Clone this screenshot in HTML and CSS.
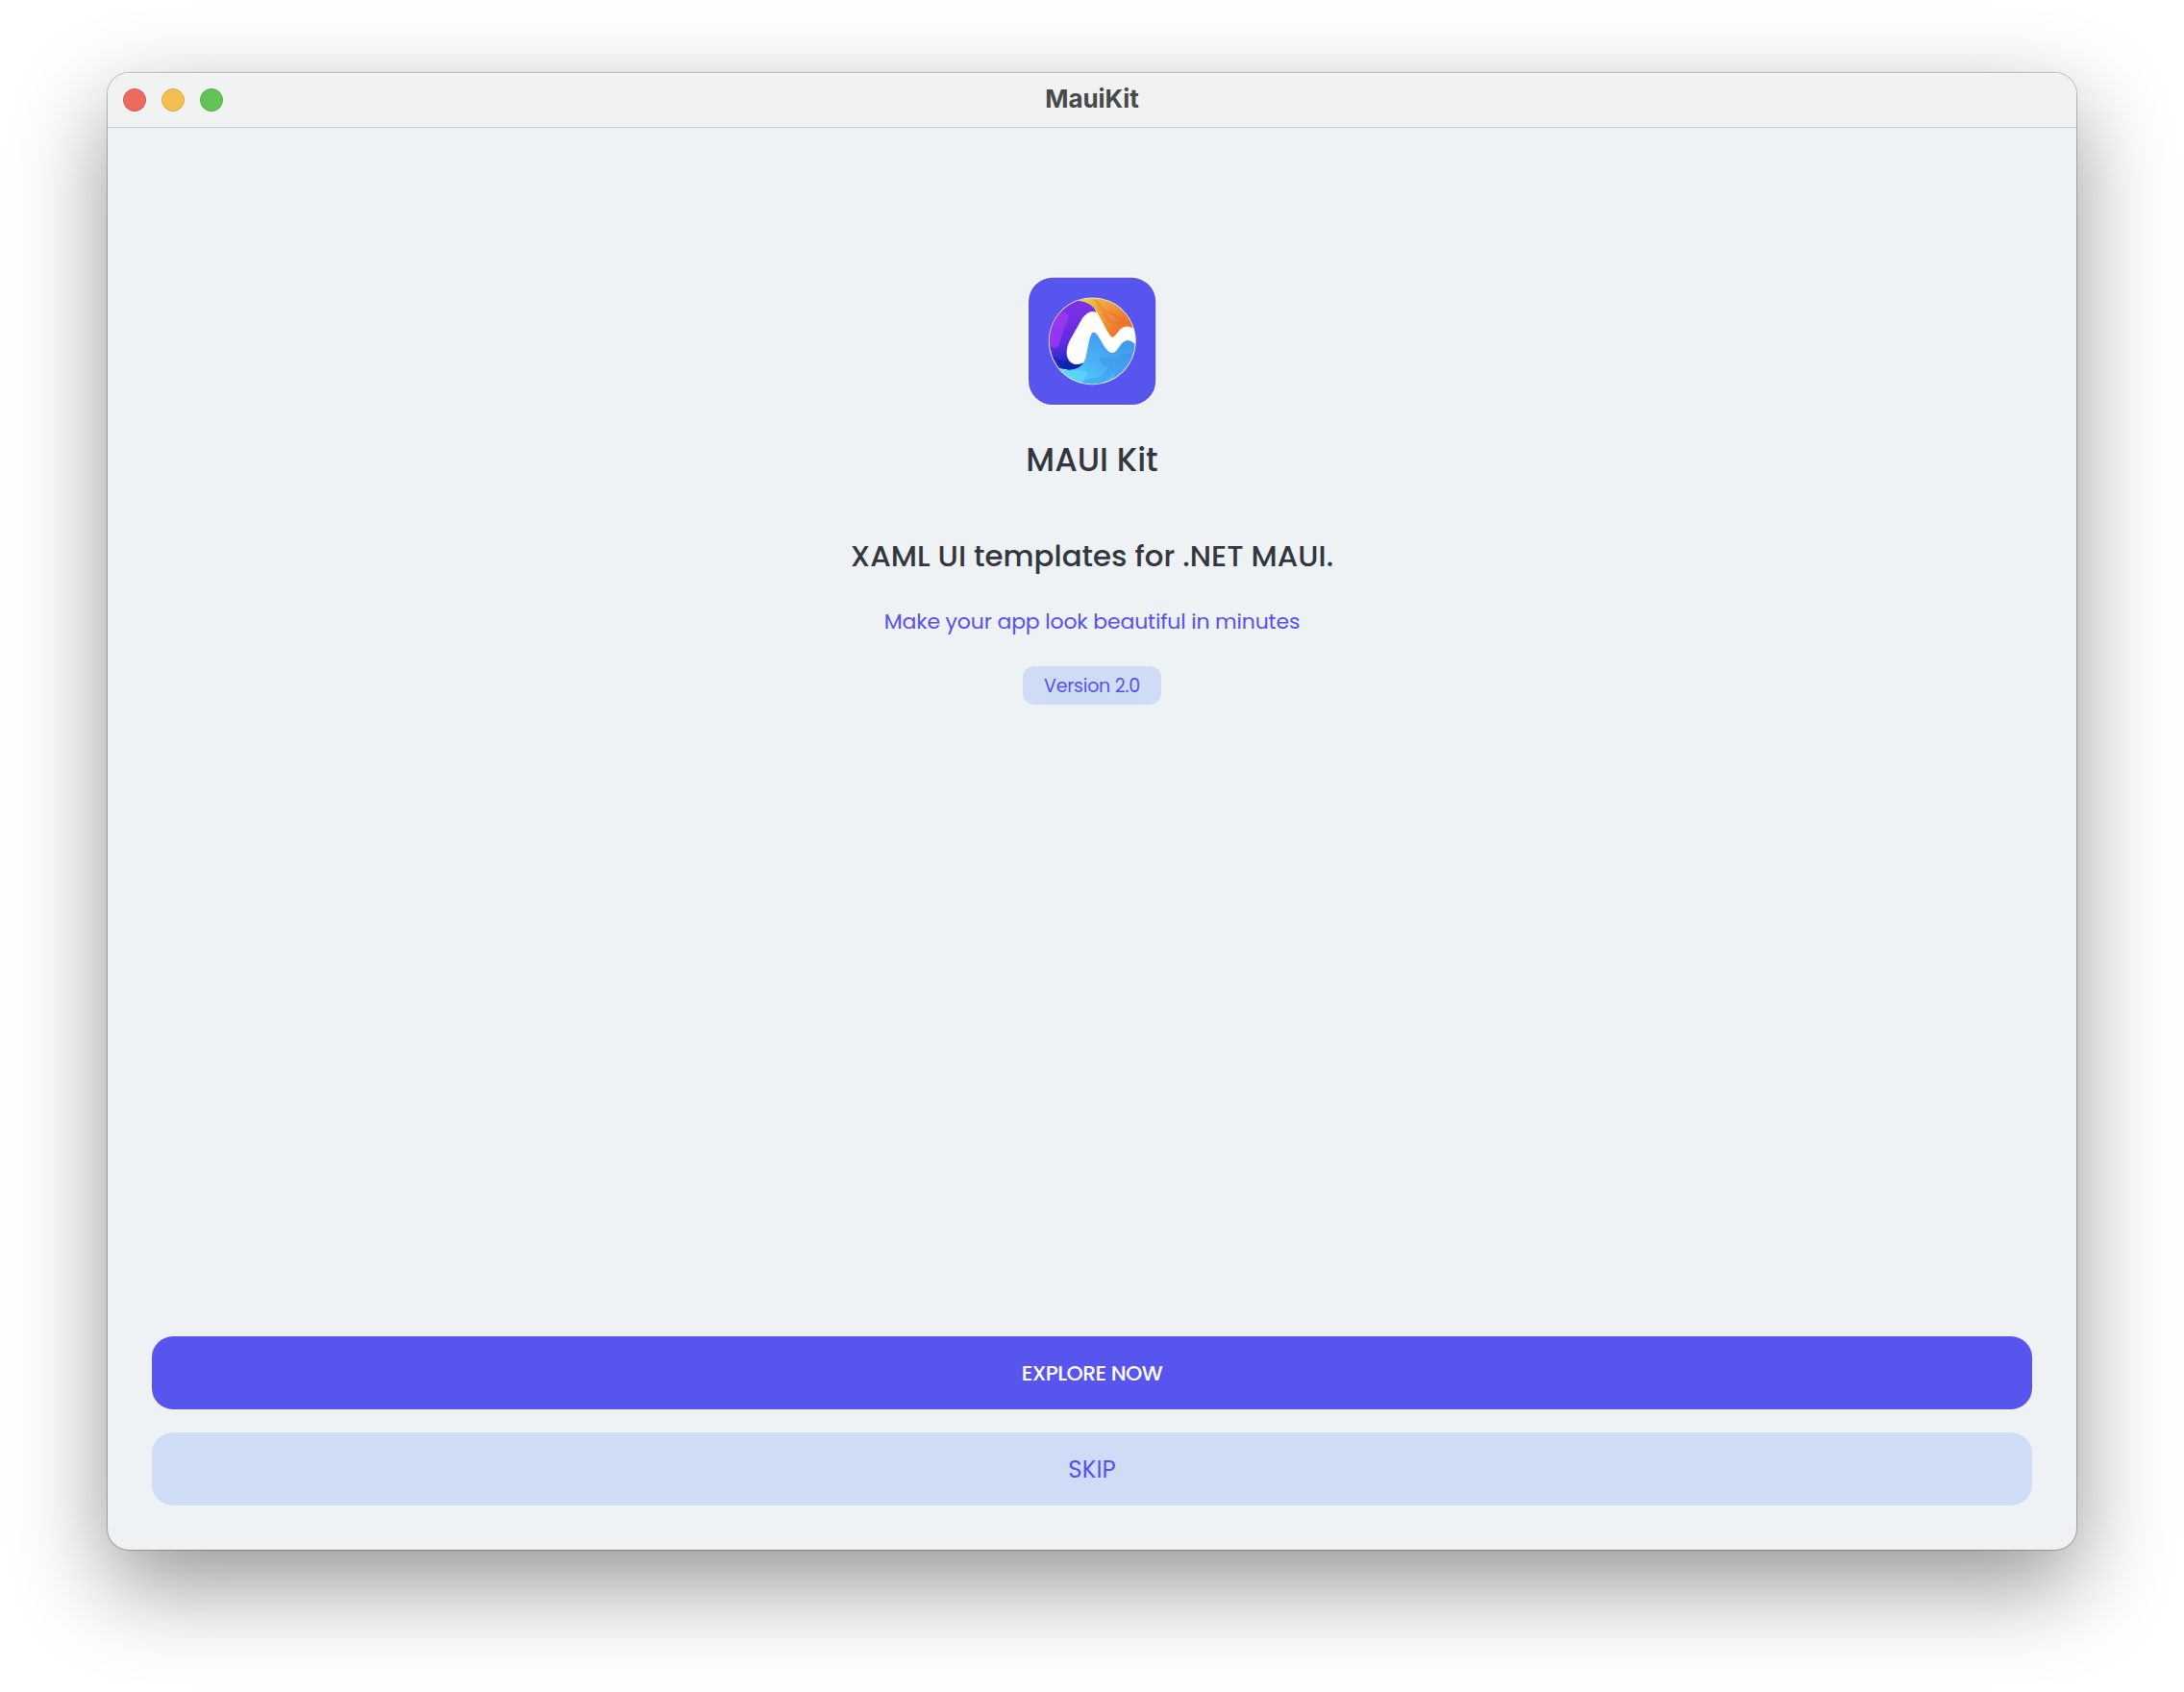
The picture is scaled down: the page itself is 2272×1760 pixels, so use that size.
FILE: index.html
```html
<!DOCTYPE html>
<html lang="en">
<head>
<meta charset="utf-8">
<title>MauiKit</title>
<link rel="stylesheet" href="styles.css">
</head>
<body>
<main class="window">
  <header class="titlebar">
    <div class="lights"><span class="light red"></span><span class="light yellow"></span><span class="light green"></span></div>
    <span class="title">MauiKit</span>
  </header>
  <section class="content">
    <div class="hero">
      <svg class="logo" viewBox="0 0 152 152" aria-hidden="true">
        <defs>
          <clipPath id="disc"><circle cx="76.3" cy="76.8" r="44.6"/></clipPath>
          <linearGradient id="purple" x1="0" y1="0" x2="0.25" y2="1"><stop offset="0" stop-color="#7a2fe0"/><stop offset=".35" stop-color="#7a30e6"/><stop offset=".7" stop-color="#5b2be0"/><stop offset="1" stop-color="#0a2cb8"/></linearGradient>
          <linearGradient id="orange" gradientUnits="userSpaceOnUse" x1="66" y1="34" x2="108" y2="66"><stop offset="0" stop-color="#e3d34a"/><stop offset=".35" stop-color="#f0a83e"/><stop offset="1" stop-color="#ee7129"/></linearGradient>
          <linearGradient id="blue" x1="0" y1="1" x2="1" y2="0"><stop offset="0" stop-color="#5be4fa"/><stop offset=".5" stop-color="#4aaef6"/><stop offset="1" stop-color="#3a90ea"/></linearGradient>
        </defs>
        <rect x="8.8" y="9.2" width="134.8" height="135.2" rx="27" fill="#fff"/>
        <rect x="10" y="10.8" width="132.3" height="132.3" rx="25" fill="#5855ee"/>
        <circle cx="76.3" cy="76.8" r="45.4" fill="#e9eefc"/>
        <g clip-path="url(#disc)">
          <rect x="30" y="30" width="94" height="94" fill="#fff"/>
          <path d="M30 30H62C72 35 80 41 80 47C75 44 70 48 66 53L53 76C49 84 48 93 53 98C58 103 64 101 70 98C65 105 57 108 48 106L30 104Z" fill="url(#purple)"/>
          <path d="M31 78C33 60 38 49 46 47C53 47 53 53 49 59C45 66 45 73 42 80C40 85 34 84 31 80Z" fill="#a13af3" opacity=".75"/>
          <path d="M36 92C43 99 50 97 55 100C61 104 66 101 70 98C65 106 55 109 45 105Z" fill="#0a24a9" opacity=".85"/>
          <path d="M60 35C71 35 77 40 82 48C90 62 93 70 97 73C102 72 104 61 113 61.5C117 62 120 64 124 68V28H60Z" fill="url(#orange)"/>
          <path d="M80 35C85 39 84 44 91 46C99 49 103 52 113 57M88 49C93 51 92 56 98 58C103 60 106 57 111 55" fill="none" stroke="#e96b27" stroke-width="3.5" opacity=".35" stroke-linecap="round"/>
          <path d="M35 103C50 110 60 107 66 101C71 96 71 79 75 70Q78 65 82 71C87 78 90 87 96 89C104 90 104 76 114 76C119 77 121 81 124 84V126H35Z" fill="url(#blue)"/>
          <path d="M84 93C87 97 94 91 98 94C102 98 106 89 112 90C117 91 119 83 124 84V107C117 117 108 121 96 122C101 115 100 107 94 105C88 104 83 98 84 93Z" fill="#398ceb" opacity=".35"/>
          <path d="M66 119C73 114 78 117 84 114C91 111 88 106 94 105C101 105 98 111 93 116L84 123H68Z" fill="#3c95ee" opacity=".45"/>
          <path d="M33 101C48 111 62 105 69 108C74 112 65 119 60 123H33Z" fill="#61e3fb" opacity=".45"/>
        </g>
      </svg>
      <h1 class="name">MAUI Kit</h1>
      <h2 class="headline">XAML UI templates for .NET MAUI.</h2>
      <p class="tagline">Make your app look beautiful in minutes</p>
      <span class="version">Version 2.0</span>
    </div>
    <div class="actions">
      <button class="button primary">EXPLORE NOW</button>
      <button class="button secondary">SKIP</button>
    </div>
  </section>
</main>
</body>
</html>
```
FILE: styles.css
```css
* { box-sizing: border-box; }
body { margin: 0; height: 1760px; padding: 76px 112px 148px; overflow: hidden; background: #fff; font-family: Poppins, Inter, sans-serif; }
.window { height: 1536px; display: flex; flex-direction: column; overflow: hidden; border-radius: 22px; background: #eef2f5; box-shadow: 0 0 0 1px rgba(0,0,0,.18), 0 0 3px rgba(0,0,0,.12), 0 36px 96px rgba(0,0,0,.42); }
.titlebar { flex: none; height: 57px; padding: 0 16px; display: grid; grid-template-columns: 1fr auto 1fr; align-items: center; background: #f0f3f2; border-bottom: 1px solid #c7c9ce; box-shadow: inset 0 1px #f9faf9; }
.lights { display: flex; gap: 16px; }
.light { width: 24px; height: 24px; border-radius: 50%; border: 1px solid; }
.red { background: #ed6a5e; border-color: #d6564c; }
.yellow { background: #f5bf4f; border-color: #d9a342; }
.green { background: #61c554; border-color: #4fab43; }
.title { padding-bottom: 2px; font: 700 26px/32px Inter, sans-serif; letter-spacing: -.1px; color: #484a49; }
.content { flex: 1; display: flex; flex-direction: column; justify-content: space-between; padding: 145px 46px 46px; }
.hero { display: flex; flex-direction: column; align-items: center; }
.logo { width: 152px; height: 152px; }
h1, h2, p { margin: 0; font-weight: 500; color: #313640; white-space: nowrap; }
.name { margin-top: 25px; font-size: 33.8px; line-height: 48px; }
.headline { margin-top: 54px; font-size: 30.85px; line-height: 44px; }
.tagline { margin-top: 30px; font-size: 22px; line-height: 32px; letter-spacing: -.16px; font-weight: 400; color: #5750ee; }
.version { width: 144px; height: 40px; margin-top: 30px; border-radius: 12px; background: #cfdcf5; color: #5750ee; font-size: 19px; letter-spacing: -.25px; line-height: 41px; text-align: center; }
.actions { display: flex; flex-direction: column; gap: 24px; }
.button { height: 76px; padding: 0; border: 0; border-radius: 22px; font-family: inherit; }
.primary { background: #5855ee; color: #fff; font-size: 22px; letter-spacing: -.55px; font-weight: 500; }
.secondary { background: #cfdcf5; color: #5750ee; font-size: 24.5px; font-weight: 400; }
```
